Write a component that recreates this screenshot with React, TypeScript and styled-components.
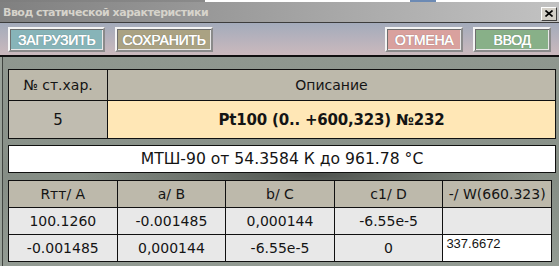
import React from "react";
import styled, { createGlobalStyle } from "styled-components";

const GlobalStyle = createGlobalStyle`
  html, body {
    margin: 0;
    padding: 0;
    width: 559px;
    height: 266px;
    overflow: hidden;
    background: #9aa29a;
  }
`;

const Window = styled.div`
  width: 559px;
  height: 266px;
  display: flex;
  flex-direction: column;
  font-family: "DejaVu Sans", Verdana, sans-serif;
  overflow: hidden;
`;

const TopStrip = styled.div`
  height: 2px;
  background: linear-gradient(
    to right,
    #7e7e7e 0,
    #8a8a8a 205px,
    #ffffff 205px,
    #ffffff 410px,
    #6c8ab4 410px,
    #6c8ab4 436px,
    #ffffff 436px
  );
`;

const TitleBar = styled.div`
  height: 20px;
  display: flex;
  align-items: center;
  justify-content: space-between;
  padding: 0 2px 0 3px;
  background: linear-gradient(to right, #808080, #c2c2c2);
`;

const Title = styled.span`
  font-family: "DejaVu Sans", Tahoma, sans-serif;
  font-weight: bold;
  font-size: 11px;
  color: #d6d3cb;
  letter-spacing: -0.5px;
`;

const CloseButton = styled.div`
  width: 14px;
  height: 12px;
  margin-top: 3px;
  background: #d4d0c8;
  border: 1px solid;
  border-color: #ffffff #404040 #404040 #ffffff;
  display: flex;
  align-items: center;
  justify-content: center;
`;

const Toolbar = styled.div`
  height: 32px;
  border-top: 1px solid #3c3c3c;
  border-bottom: 2px solid #101010;
  display: flex;
  align-items: center;
  padding: 0 8px;
  gap: 10px;
  background: linear-gradient(to bottom, #a3abbb, #cbb9bd);
`;

const Spacer = styled.div`
  flex: 1;
`;

const Button = styled.div<{ $bg: string; $w: number }>`
  box-sizing: border-box;
  width: ${(p) => p.$w}px;
  height: 25px;
  margin-top: 1px;
  background: ${(p) => p.$bg};
  border: 2px solid;
  border-color: #f4f4f4 #8a8a8a #8a8a8a #f4f4f4;
  box-shadow: inset 1px 1px 0 #6e6e6e, inset -1px -1px 0 #e8e8e8;
  display: flex;
  align-items: center;
  justify-content: center;
  font-family: "Liberation Sans", Arial, sans-serif;
  font-size: 14px;
  color: #ffffff;
  text-shadow: 0.4px 0 0 #ffffff, 0 0 1px rgba(60, 60, 60, 0.6);
  letter-spacing: -0.2px;
`;

const Main = styled.div`
  flex: 1;
  padding: 12px 3px 0 5px;
  border-left: 1px solid #404440;
  margin-left: 2px;
  display: flex;
  flex-direction: column;
  background:
    radial-gradient(ellipse 230px 26px at 310px 118px, #4e524e 0%, rgba(90, 95, 90, 0.6) 50%, rgba(140, 148, 140, 0) 100%),
    linear-gradient(to bottom, #8f978f 0, #8a928a 80px, #858d85 120px, #939b93 100%);
`;

const Table = styled.table<{ $w: number }>`
  width: ${(p) => p.$w}px;
  border-collapse: collapse;
  table-layout: fixed;
  border: 1px solid #101010;
`;

const Cell = styled.td<{ $bg: string; $h: number; $size?: number; $bold?: boolean }>`
  box-sizing: border-box;
  height: ${(p) => p.$h}px;
  padding: 0;
  text-align: center;
  border: 1px solid #101010;
  background: ${(p) => p.$bg};
  color: #141414;
  font-family: "DejaVu Sans", Tahoma, sans-serif;
  font-size: ${(p) => p.$size ?? 14}px;
  font-weight: ${(p) => (p.$bold ? "bold" : "normal")};
  letter-spacing: ${(p) => (p.$bold ? "-0.2px" : "0")};
  white-space: nowrap;
  overflow: hidden;
`;

const EditCell = styled.td`
  box-sizing: border-box;
  height: 27px;
  padding: 1px 0 0 3px;
  vertical-align: top;
  text-align: left;
  border: 1px solid #101010;
  background: #ffffff;
  color: #141414;
  font-family: "Liberation Sans", Arial, sans-serif;
  font-size: 13px;
`;

const RangeBox = styled.div`
  box-sizing: border-box;
  width: 548px;
  height: 28px;
  margin: 6px 0 7px;
  background: #ffffff;
  border: 1px solid #101010;
  display: flex;
  align-items: center;
  justify-content: center;
  font-family: "DejaVu Sans", Tahoma, sans-serif;
  font-size: 15.6px;
  color: #141414;
`;

const HEAD = "#bdb9ab";
const DATA = "#e8e8e8";

const coeffHeads = ["Rтт/ A", "a/ B", "b/ C", "c1/ D", "-/ W(660.323)"];
const rows = [
  ["100.1260", "-0.001485", "0,000144", "-6.55e-5", ""],
  ["-0.001485", "0,000144", "-6.55e-5", "0", "337.6672"],
];

export default function App() {
  return (
    <Window>
      <GlobalStyle />
      <TopStrip />
      <TitleBar>
        <Title>Ввод статической характеристики</Title>
        <CloseButton>
          <svg width="8" height="7" viewBox="0 0 8 7">
            <path d="M0.5 0.5 L7.5 6.5 M7.5 0.5 L0.5 6.5" stroke="#000" strokeWidth="1.6" />
          </svg>
        </CloseButton>
      </TitleBar>
      <Toolbar>
        <Button $bg="#87b4b8" $w={97}>ЗАГРУЗИТЬ</Button>
        <Button $bg="#aaa283" $w={98}>СОХРАНИТЬ</Button>
        <Spacer />
        <Button $bg="#d9a19e" $w={78}>ОТМЕНА</Button>
        <Button $bg="#88b088" $w={78}>ВВОД</Button>
      </Toolbar>
      <Main>
        <Table $w={548}>
          <colgroup>
            <col style={{ width: 99 }} />
            <col />
          </colgroup>
          <tbody>
            <tr>
              <Cell $bg={HEAD} $h={31}>№ ст.хар.</Cell>
              <Cell $bg={HEAD} $h={31}>Описание</Cell>
            </tr>
            <tr>
              <Cell $bg="#c0bcb0" $h={38} $size={15}>5</Cell>
              <Cell $bg="#ffe7b6" $h={38} $size={15} $bold>
                Pt100 (0.. +600,323) №232
              </Cell>
            </tr>
          </tbody>
        </Table>
        <RangeBox>МТШ-90 от 54.3584 К до 961.78 °С</RangeBox>
        <Table $w={544}>
          <tbody>
            <tr>
              {coeffHeads.map((h) => (
                <Cell key={h} $bg={HEAD} $h={27}>
                  {h}
                </Cell>
              ))}
            </tr>
            {rows.map((r, i) => (
              <tr key={i}>
                {r.map((v, j) =>
                  i === 1 && j === 4 ? (
                    <EditCell key={j}>{v}</EditCell>
                  ) : (
                    <Cell key={j} $bg={DATA} $h={27}>
                      {v}
                    </Cell>
                  )
                )}
              </tr>
            ))}
          </tbody>
        </Table>
      </Main>
    </Window>
  );
}
